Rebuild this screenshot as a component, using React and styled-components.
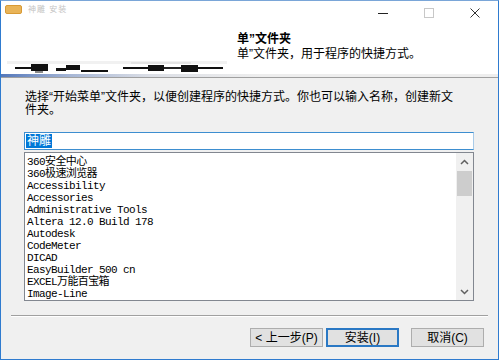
import React from "react";
import styled, { createGlobalStyle } from "styled-components";

const GlobalStyle = createGlobalStyle`
  html, body {
    margin: 0;
    padding: 0;
    background: #ffffff;
  }
  body {
    font-family: "Liberation Sans", "Noto Sans CJK SC", sans-serif;
    font-size: 12px;
    color: #000;
  }
`;

const Window = styled.div`
  width: 499px;
  height: 360px;
  box-sizing: border-box;
  border: 1px solid #2f7bcf;
  border-top-color: #7aa6d8;
  display: flex;
  flex-direction: column;
  background: #f0f0f0;
  overflow: hidden;
`;

const Header = styled.div`
  background: #ffffff;
  display: flex;
  flex-direction: column;
  height: 73px;
`;

const TitleBar = styled.div`
  height: 25px;
  display: flex;
  align-items: center;
`;

const AppIcon = styled.div`
  width: 15px;
  height: 7px;
  margin-left: 4px;
  margin-top: -8px;
  border-radius: 2px;
  background: #e9b458;
  border: 1px solid #d89a35;
`;

const WindowTitle = styled.span`
  margin-left: 6px;
  margin-top: -10px;
  font-size: 8px;
  color: #c4c4c4;
  letter-spacing: 1px;
`;

const Controls = styled.div`
  margin-left: auto;
  display: flex;
  height: 100%;
`;

const ControlButton = styled.div`
  width: 46px;
  height: 100%;
  display: flex;
  align-items: center;
  justify-content: center;
  margin-top: -1px;
`;

const HeaderBody = styled.div`
  flex: 1;
  display: flex;
`;

const Scribble = styled.div`
  width: 236px;
  display: flex;
  align-items: flex-end;
`;

const HeaderText = styled.div`
  padding-top: 6px;
  line-height: 15px;
`;

const HeaderTitle = styled.div`
  font-weight: bold;
`;

const HeaderSubtitle = styled.div``;

const Rule = styled.div`
  height: 3px;
  background: linear-gradient(to right, #5478bb 0px, #a7b7d6 70px, #dcdfe6 150px, #eeeeee 260px);
  border-bottom: 1px solid #a0a0a0;
`;

const Body = styled.div`
  flex: 1;
  display: flex;
  flex-direction: column;
`;

const Content = styled.div`
  padding: 13px 24px 0 23px;
  display: flex;
  flex-direction: column;
`;

const Description = styled.div`
  padding-left: 1px;
`;

const DescLine = styled.div`
  line-height: 13px;
  height: 13px;
  white-space: nowrap;
`;

const NameInput = styled.div`
  margin-top: 15px;
  height: 18px;
  box-sizing: border-box;
  background: #fff;
  border: 1px solid #3d8ed0;
  border-right-color: #a9cbe8;
  display: flex;
  align-items: center;
  padding-left: 1px;
`;

const Selected = styled.span`
  background: #0078d7;
  color: #fff;
  line-height: 14px;
  padding: 0 1px;
`;

const ListBox = styled.div`
  margin-top: 2px;
  height: 149px;
  box-sizing: border-box;
  border: 1px solid #828790;
  background: #fff;
  display: flex;
`;

const Items = styled.ul`
  flex: 1;
  margin: 0;
  padding: 3px 0 0 2px;
  list-style: none;
  overflow: hidden;
`;

const Item = styled.li`
  height: 12px;
  line-height: 12px;
  font-family: "Liberation Mono", "Noto Sans CJK SC", monospace;
  font-size: 11px;
  letter-spacing: -0.6px;
  white-space: nowrap;
`;

const ScrollBar = styled.div`
  width: 17px;
  background: #f0f0f0;
  display: flex;
  flex-direction: column;
`;

const Arrow = styled.div`
  height: 17px;
  display: flex;
  align-items: center;
  justify-content: center;
`;

const Thumb = styled.div`
  height: 25px;
  margin: 1px 1px 0 1px;
  background: #cdcdcd;
`;

const Track = styled.div`
  flex: 1;
`;

const Footer = styled.div`
  display: flex;
  flex-direction: column;
  padding: 0 10px;
`;

const Separator = styled.div`
  margin-top: 14px;
  height: 1px;
  background: #a0a0a0;
  border-bottom: 1px solid #ffffff;
`;

const ButtonRow = styled.div`
  margin-top: 11px;
  display: flex;
  justify-content: flex-end;
  padding-right: 4px;
`;

const Button = styled.div`
  width: ${(p) => p.$w || 73}px;
  height: 19px;
  box-sizing: border-box;
  margin-left: ${(p) => p.$gap || 0}px;
  background: #e1e1e1;
  border: ${(p) => (p.$focused ? "2px solid #2a78c4" : "1px solid #adadad")};
  display: flex;
  align-items: center;
  justify-content: center;
  font-size: 12px;
  line-height: 1;
  white-space: nowrap;
`;

const folders = [
  "360安全中心",
  "360极速浏览器",
  "Accessibility",
  "Accessories",
  "Administrative Tools",
  "Altera 12.0 Build 178",
  "Autodesk",
  "CodeMeter",
  "DICAD",
  "EasyBuilder 500 cn",
  "EXCEL万能百宝箱",
  "Image-Line",
];

const App = () => {
  return (
    <>
      <GlobalStyle />
      <Window>
        <Header>
          <TitleBar>
            <AppIcon />
            <WindowTitle>神雕 安装</WindowTitle>
            <Controls>
              <ControlButton>
                <svg width="10" height="10" viewBox="0 0 10 10">
                  <rect x="0" y="5" width="10" height="1" fill="#222" />
                </svg>
              </ControlButton>
              <ControlButton>
                <svg width="10" height="10" viewBox="0 0 10 10">
                  <rect x="0.5" y="0.5" width="9" height="9" fill="none" stroke="#c8c8c8" />
                </svg>
              </ControlButton>
              <ControlButton>
                <svg width="10" height="10" viewBox="0 0 10 10">
                  <path d="M0.5 0.5 L9.5 9.5 M9.5 0.5 L0.5 9.5" stroke="#333" strokeWidth="1" />
                </svg>
              </ControlButton>
            </Controls>
          </TitleBar>
          <HeaderBody>
            <Scribble>
              <svg width="236" height="14" viewBox="0 0 236 14">
                <rect x="6" y="1" width="220" height="3" fill="#f1f1f1" />
                <rect x="14" y="7" width="16" height="2" fill="#111" />
                <rect x="30" y="4" width="17" height="7" fill="#111" />
                <rect x="34" y="11" width="8" height="2" fill="#888" />
                <rect x="55" y="8" width="10" height="3" fill="#111" />
                <rect x="65" y="5" width="14" height="5" fill="#111" />
                <rect x="80" y="10" width="27" height="2" fill="#111" />
                <rect x="122" y="7" width="25" height="2" fill="#111" />
                <rect x="147" y="5" width="16" height="6" fill="#111" />
                <rect x="163" y="7" width="17" height="2" fill="#222" />
                <rect x="180" y="5" width="17" height="7" fill="#111" />
                <rect x="197" y="7" width="25" height="2" fill="#111" />
                <rect x="130" y="2" width="60" height="2" fill="#e4e4e4" />
              </svg>
            </Scribble>
            <HeaderText>
              <HeaderTitle>单”文件夹</HeaderTitle>
              <HeaderSubtitle>单”文件夹，用于程序的快捷方式。</HeaderSubtitle>
            </HeaderText>
          </HeaderBody>
        </Header>
        <Rule />
        <Body>
          <Content>
            <Description>
              <DescLine>选择“开始菜单”文件夹，以便创建程序的快捷方式。你也可以输入名称，创建新文</DescLine>
              <DescLine>件夹。</DescLine>
            </Description>
            <NameInput>
              <Selected>神雕</Selected>
            </NameInput>
            <ListBox>
              <Items>
                {folders.map((f) => (
                  <Item key={f}>{f}</Item>
                ))}
              </Items>
              <ScrollBar>
                <Arrow>
                  <svg width="9" height="6" viewBox="0 0 9 6">
                    <path d="M1 5 L4.5 1.5 L8 5" fill="none" stroke="#606060" strokeWidth="1.5" />
                  </svg>
                </Arrow>
                <Thumb />
                <Track />
                <Arrow>
                  <svg width="9" height="6" viewBox="0 0 9 6">
                    <path d="M1 1 L4.5 4.5 L8 1" fill="none" stroke="#606060" strokeWidth="1.5" />
                  </svg>
                </Arrow>
              </ScrollBar>
            </ListBox>
          </Content>
          <Footer>
            <Separator />
            <ButtonRow>
              <Button $w={73}>&lt; 上一步(P)</Button>
              <Button $w={73} $gap={3} $focused>
                安装(I)
              </Button>
              <Button $w={73} $gap={12}>
                取消(C)
              </Button>
            </ButtonRow>
          </Footer>
        </Body>
      </Window>
    </>
  );
};

export default App;
